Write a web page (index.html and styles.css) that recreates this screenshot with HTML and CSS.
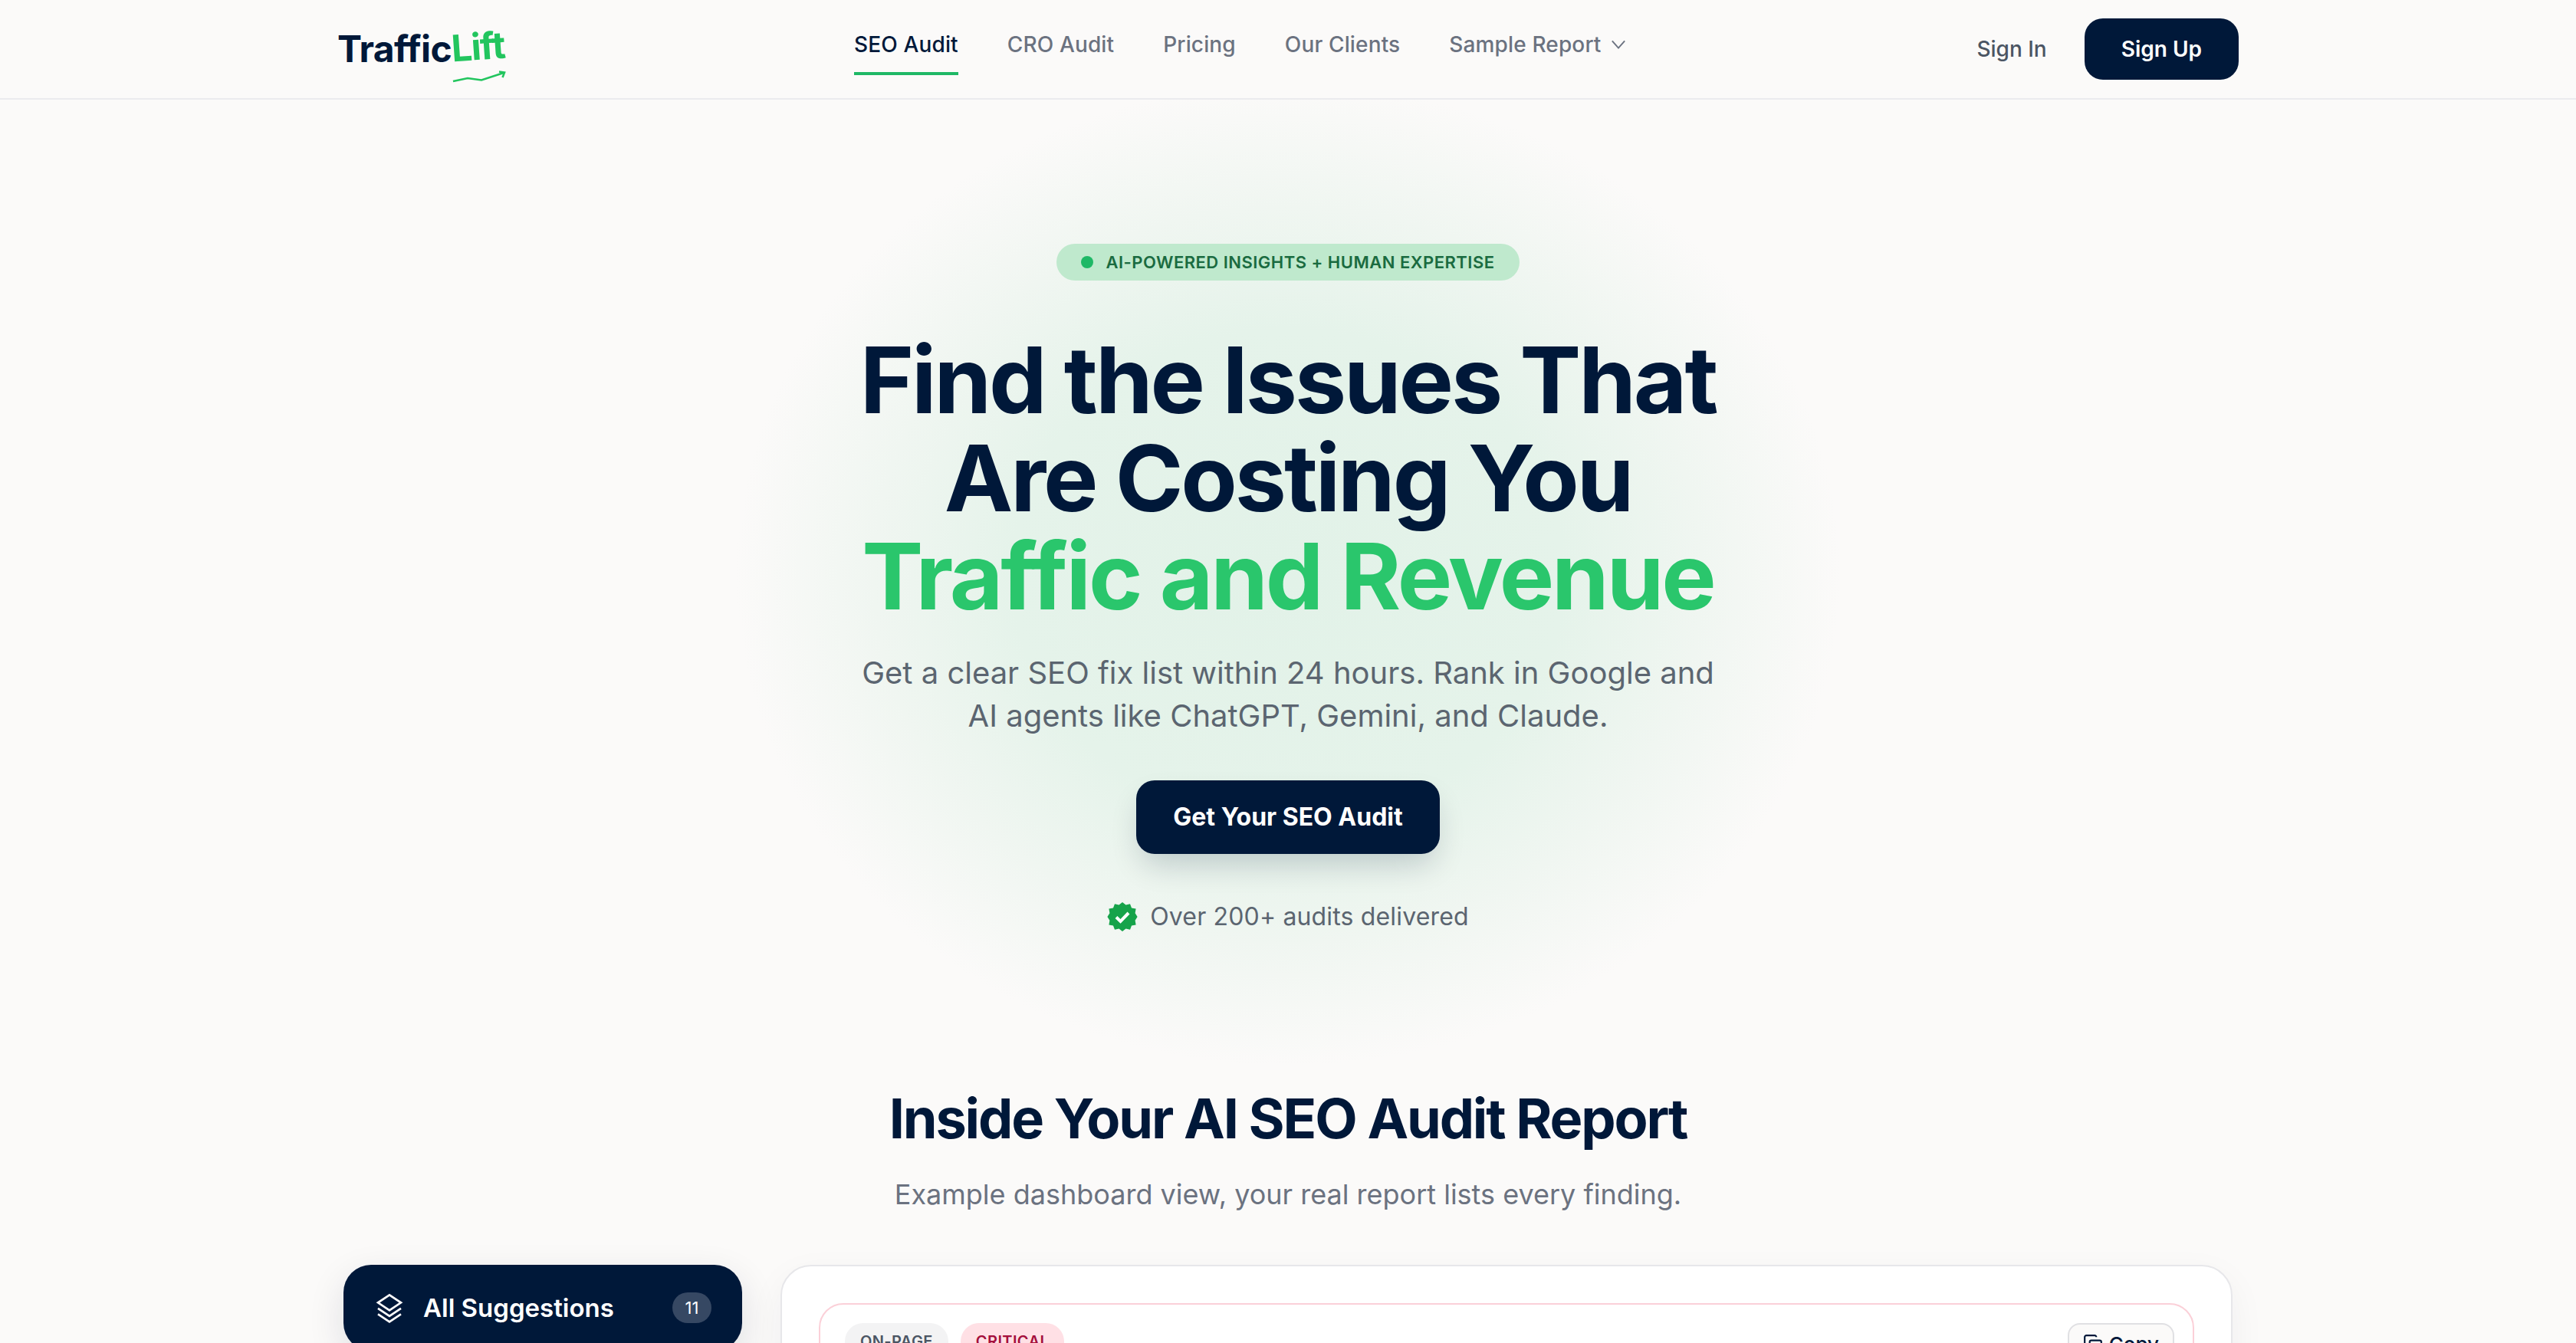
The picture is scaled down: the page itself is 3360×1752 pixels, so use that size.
FILE: index.html
```html
<!DOCTYPE html>
<html lang="en">

<head>
    <meta charset="UTF-8">
    <meta name="viewport" content="width=device-width, initial-scale=1.0">
    <title>TrafficLift - AI SEO Audit</title>
    <link rel="stylesheet" href="styles.css">
</head>

<body>
    <header class="topbar">
        <div class="topbar-inner">
            <a class="logo" href="#">
                <span>Traffic</span><span class="logo-lift">Lift</span>
                <svg class="logo-arrow" viewBox="0 0 70 16" fill="none" stroke="#22c55e" stroke-width="2.6">
                    <path d="M1 14 L20 10 L38 12.5 L67 3" />
                    <path d="M61 1.5 L68 2.6 L65.5 9" />
                </svg>
            </a>
            <nav class="nav">
                <a class="nav-link active" href="#">SEO Audit</a>
                <a class="nav-link" href="#">CRO Audit</a>
                <a class="nav-link" href="#">Pricing</a>
                <a class="nav-link" href="#">Our Clients</a>
                <a class="nav-link" href="#">Sample Report
                    <svg class="chevron" viewBox="0 0 24 24" fill="none" stroke="currentColor" stroke-width="1.6">
                        <path d="M5 8 L12 16 L19 8" />
                    </svg>
                </a>
            </nav>
            <div class="auth">
                <a class="sign-in" href="#">Sign In</a>
                <a class="sign-up" href="#">Sign Up</a>
            </div>
        </div>
    </header>

    <main>
        <section class="hero">
            <div class="pill"><span class="pill-dot"></span>AI-POWERED INSIGHTS + HUMAN EXPERTISE</div>
            <h1>Find the Issues That<br>Are Costing You<br><span class="green">Traffic and Revenue</span></h1>
            <p class="lead">Get a clear SEO fix list within 24 hours. Rank in Google and<br>AI agents like ChatGPT, Gemini, and Claude.</p>
            <a class="cta" href="#">Get Your SEO Audit</a>
            <div class="proof">
                <svg class="badge" viewBox="0 0 40 40">
                    <path fill="#16a34a" d="M20 1 L24.5 4.6 L30 3.2 L32 8.4 L37.6 9.6 L36.6 15.2 L39.6 20 L36.6 24.8 L37.6 30.4 L32 31.6 L30 36.8 L24.5 35.4 L20 39 L15.5 35.4 L10 36.8 L8 31.6 L2.4 30.4 L3.4 24.8 L0.4 20 L3.4 15.2 L2.4 9.6 L8 8.4 L10 3.2 L15.5 4.6 Z" />
                    <path fill="none" stroke="#fff" stroke-width="4" d="M12 20.5 L17.5 26 L28 15" />
                </svg>
                Over 200+ audits delivered
            </div>
        </section>

        <section class="report">
            <h2>Inside Your AI SEO Audit Report</h2>
            <p class="report-sub">Example dashboard view, your real report lists every finding.</p>
            <div class="dash">
                <aside class="side">
                    <div class="side-item">
                        <svg class="layers" viewBox="0 0 24 24" fill="none" stroke="#fff" stroke-width="1.6">
                            <path d="M12 2 L21 8 L12 14 L3 8 Z" />
                            <path d="M3 12.5 L12 18.5 L21 12.5" />
                            <path d="M3 17 L12 23 L21 17" />
                        </svg>
                        <span class="side-label">All Suggestions</span>
                        <span class="side-count">11</span>
                    </div>
                </aside>
                <div class="panel">
                    <div class="finding">
                        <div class="finding-head">
                            <div class="tags">
                                <span class="tag">ON-PAGE</span>
                                <span class="tag critical">CRITICAL</span>
                            </div>
                            <button class="copy">
                                <svg class="copy-icon" viewBox="0 0 24 24" fill="none" stroke="#001839" stroke-width="2">
                                    <rect x="8" y="8" width="14" height="14" rx="2" />
                                    <path d="M4 16 C3 16 2 15 2 14 V4 C2 3 3 2 4 2 H14 C15 2 16 3 16 4" />
                                </svg>
                                Copy
                            </button>
                        </div>
                    </div>
                </div>
            </div>
        </section>
    </main>
</body>

</html>
```

FILE: styles.css
```css
* {
    box-sizing: border-box;
}

html,
body {
    height: 100%;
    overflow: hidden;
}

body {
    margin: 0;
    background-color: #fbfaf9;
    color: #001839;
    font-family: Inter, 'Liberation Sans', sans-serif;
}

a {
    color: inherit;
    text-decoration: none;
}

.topbar {
    height: 130px;
    border-bottom: 2px solid #ebebee;
}

.topbar-inner {
    display: grid;
    grid-template-columns: 674px 1fr auto;
    align-items: center;
    max-width: 2480px;
    height: 128px;
    margin: 0 auto;
}

.logo {
    position: relative;
    justify-self: start;
    display: flex;
    font-size: 48px;
    font-weight: 700;
    letter-spacing: -0.015em;
    line-height: 1;
}

.logo-lift {
    color: #22c55e;
    letter-spacing: -0.03em;
    transform: rotate(-4deg) translateY(-3px);
}

.logo-arrow {
    position: absolute;
    right: -2px;
    bottom: -20px;
    width: 70px;
    height: 16px;
}

.nav {
    display: flex;
    gap: 64px;
    height: 100%;
}

.nav-link {
    display: flex;
    align-items: center;
    gap: 8px;
    height: 98px;
    padding-top: 21px;
    border-bottom: 4px solid transparent;
    color: #6b7280;
    font-size: 28px;
    font-weight: 500;
    letter-spacing: 0.005em;
}

.nav-link.active {
    border-bottom-color: #1fb866;
    color: #001839;
}

.chevron {
    width: 28px;
    height: 28px;
}

.auth {
    justify-self: end;
    display: flex;
    align-items: center;
    gap: 49px;
}

.sign-in {
    color: #4b5563;
    font-size: 28px;
    font-weight: 500;
}

.sign-up {
    padding: 22px 48px;
    border-radius: 24px;
    background-color: #001839;
    color: #fff;
    font-size: 28px;
    font-weight: 600;
    line-height: 36px;
}

.hero {
    display: flex;
    flex-direction: column;
    align-items: center;
    height: 1289px;
    padding-top: 188px;
    background-image: radial-gradient(ellipse 720px 640px at 50% 620px, #e2f2e8 0%, #e5f3ea 50%, #f0f6f1 75%, #fbfaf9 100%);
    text-align: center;
}

.pill {
    display: flex;
    align-items: center;
    gap: 16px;
    height: 48px;
    padding: 0 32px;
    border-radius: 24px;
    background-color: #bfe9cd;
    color: #1a6b40;
    font-size: 22px;
    font-weight: 600;
    letter-spacing: 0.022em;
}

.pill-dot {
    width: 16px;
    height: 16px;
    border-radius: 50%;
    background-color: #1fb866;
}

h1 {
    margin: 66px 0 0;
    font-size: 120px;
    font-weight: 700;
    letter-spacing: -0.026em;
    line-height: 128px;
}

.green {
    color: #2ac66c;
}

.lead {
    margin: 34px 0 0;
    color: #5b6570;
    font-size: 40px;
    line-height: 56px;
}

.cta {
    margin-top: 56px;
    padding: 0 48px;
    border-radius: 24px;
    background-color: #001839;
    box-shadow: 0 20px 40px -8px rgba(0, 24, 57, 0.2);
    color: #fff;
    font-size: 32px;
    font-weight: 700;
    line-height: 96px;
}

.proof {
    display: flex;
    align-items: center;
    gap: 16px;
    margin-top: 60px;
    color: #5b6570;
    font-size: 32px;
    letter-spacing: 0.005em;
    line-height: 44px;
}

.badge {
    width: 40px;
    height: 40px;
}

.report {
    display: flex;
    flex-direction: column;
    align-items: center;
}

h2 {
    margin: 0;
    font-size: 72px;
    font-weight: 700;
    letter-spacing: -0.03em;
    line-height: 80px;
}

.report-sub {
    margin: 35px 0 0;
    color: #6b7280;
    font-size: 36px;
    line-height: 48px;
}

.dash {
    display: grid;
    grid-template-columns: 520px 1fr;
    gap: 50px;
    width: 2464px;
    margin-top: 68px;
}

.side-item {
    display: flex;
    align-items: center;
    gap: 24px;
    height: 112px;
    padding: 0 40px;
    border-radius: 36px;
    background-color: #001839;
    box-shadow: 0 16px 48px rgba(0, 24, 57, 0.12);
    color: #fff;
}

.layers {
    width: 40px;
    height: 40px;
}

.side-label {
    flex: 1;
    font-size: 33px;
    font-weight: 600;
}

.side-count {
    width: 51px;
    height: 40px;
    border-radius: 20px;
    background-color: #364863;
    font-size: 22px;
    line-height: 40px;
    text-align: center;
}

.panel {
    padding: 48px;
    border: 2px solid #e7e7ea;
    border-radius: 40px;
    background-color: #fff;
    box-shadow: 0 16px 48px rgba(0, 24, 57, 0.05);
}

.finding {
    padding: 24px 24px 24px 32px;
    border: 2px solid #fbd0d8;
    border-radius: 32px;
}

.finding-head {
    display: flex;
    align-items: flex-start;
    justify-content: space-between;
}

.tags {
    display: flex;
    gap: 16px;
}

.tag {
    padding: 0 20px;
    border-radius: 24px;
    background-color: #f3f3f4;
    color: #4b5563;
    font-size: 20px;
    font-weight: 600;
    letter-spacing: 0.02em;
    line-height: 48px;
}

.tag.critical {
    background-color: #ffe0e5;
    color: #a50f3c;
}

.copy {
    display: flex;
    align-items: center;
    gap: 8px;
    height: 54px;
    padding: 0 18px;
    border: 2px solid #e0e0e3;
    border-radius: 16px;
    background-color: #fbfaf9;
    color: #001839;
    font-family: inherit;
    font-size: 26px;
    font-weight: 500;
}

.copy-icon {
    width: 26px;
    height: 26px;
}
```
